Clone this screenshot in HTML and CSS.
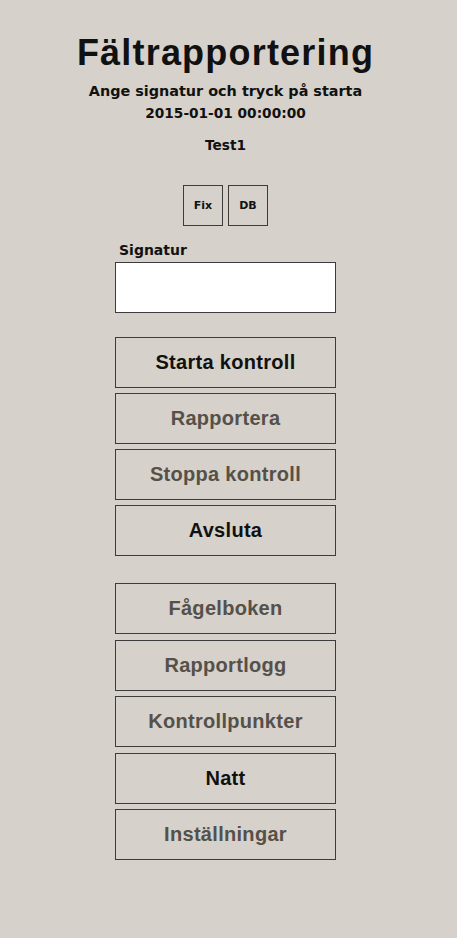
FILE: index.html
```html
<!DOCTYPE html>
<html lang="sv">
<head>
<meta charset="utf-8">
<title>Fältrapportering</title>
<link rel="stylesheet" href="styles.css">
</head>
<body>
<main class="page">
  <h1 class="title">Fältrapportering</h1>
  <p class="subtitle">Ange signatur och tryck på starta</p>
  <p class="info date">2015-01-01 00:00:00</p>
  <p class="info user">Test1</p>
  <div class="tools">
    <button class="tool">Fix</button>
    <button class="tool">DB</button>
  </div>
  <div class="form">
    <label class="label" for="sig">Signatur</label>
    <input class="sig" id="sig" type="text">
    <div class="group first">
      <button class="btn active">Starta kontroll</button>
      <button class="btn">Rapportera</button>
      <button class="btn">Stoppa kontroll</button>
      <button class="btn active">Avsluta</button>
    </div>
    <div class="group second">
      <button class="btn">Fågelboken</button>
      <button class="btn">Rapportlogg</button>
      <button class="btn">Kontrollpunkter</button>
      <button class="btn active">Natt</button>
      <button class="btn">Inställningar</button>
    </div>
  </div>
</main>
</body>
</html>
```

FILE: styles.css
```css
html, body {
  margin: 0;
  padding: 0;
  background: #d6d1ca;
}
body {
  font-family: "DejaVu Sans", "Liberation Sans", sans-serif;
  color: #111;
}
.page {
  width: 451px;
  display: flex;
  flex-direction: column;
  align-items: center;
  padding-top: 33px;
}
.title {
  margin: 0;
  font-family: "Liberation Sans", Arial, sans-serif;
  font-size: 36px;
  line-height: 40px;
  font-weight: 700;
  letter-spacing: 1.2px;
}
.subtitle {
  margin: 9px 0 0;
  font-size: 14.4px;
  line-height: 18px;
  font-weight: 700;
}
.info {
  margin: 0;
  font-size: 13.7px;
  line-height: 18px;
  font-weight: 700;
}
.date { margin-top: 3.6px; }
.user { margin-top: 14px; }
.tools {
  display: flex;
  gap: 5px;
  margin-top: 31.7px;
}
.tool {
  width: 40px;
  height: 41px;
  padding: 0;
  background: #d6d1ca;
  border: 1px solid #3c3c3c;
  font-family: inherit;
  font-size: 11px;
  font-weight: 700;
  color: #111;
}
.form {
  width: 221px;
  display: flex;
  flex-direction: column;
  margin-top: 15px;
}
.label {
  font-size: 14px;
  line-height: 18px;
  font-weight: 700;
  padding-left: 4px;
}
.sig {
  box-sizing: border-box;
  height: 51px;
  margin: 3px 0 0;
  border: 1px solid #3c3c3c;
  background: #fff;
}
.group {
  display: flex;
  flex-direction: column;
  gap: 5.5px;
}
.first { margin-top: 24px; gap: 5px; }
.second { margin-top: 27px; }
.btn {
  box-sizing: border-box;
  height: 51px;
  padding: 0;
  background: #d6d1ca;
  border: 1px solid #3c3c3c;
  font-family: "Liberation Sans", Arial, sans-serif;
  font-size: 20px;
  font-weight: 700;
  letter-spacing: 0.3px;
  color: #555049;
}
.btn.active { color: #111; }
```
